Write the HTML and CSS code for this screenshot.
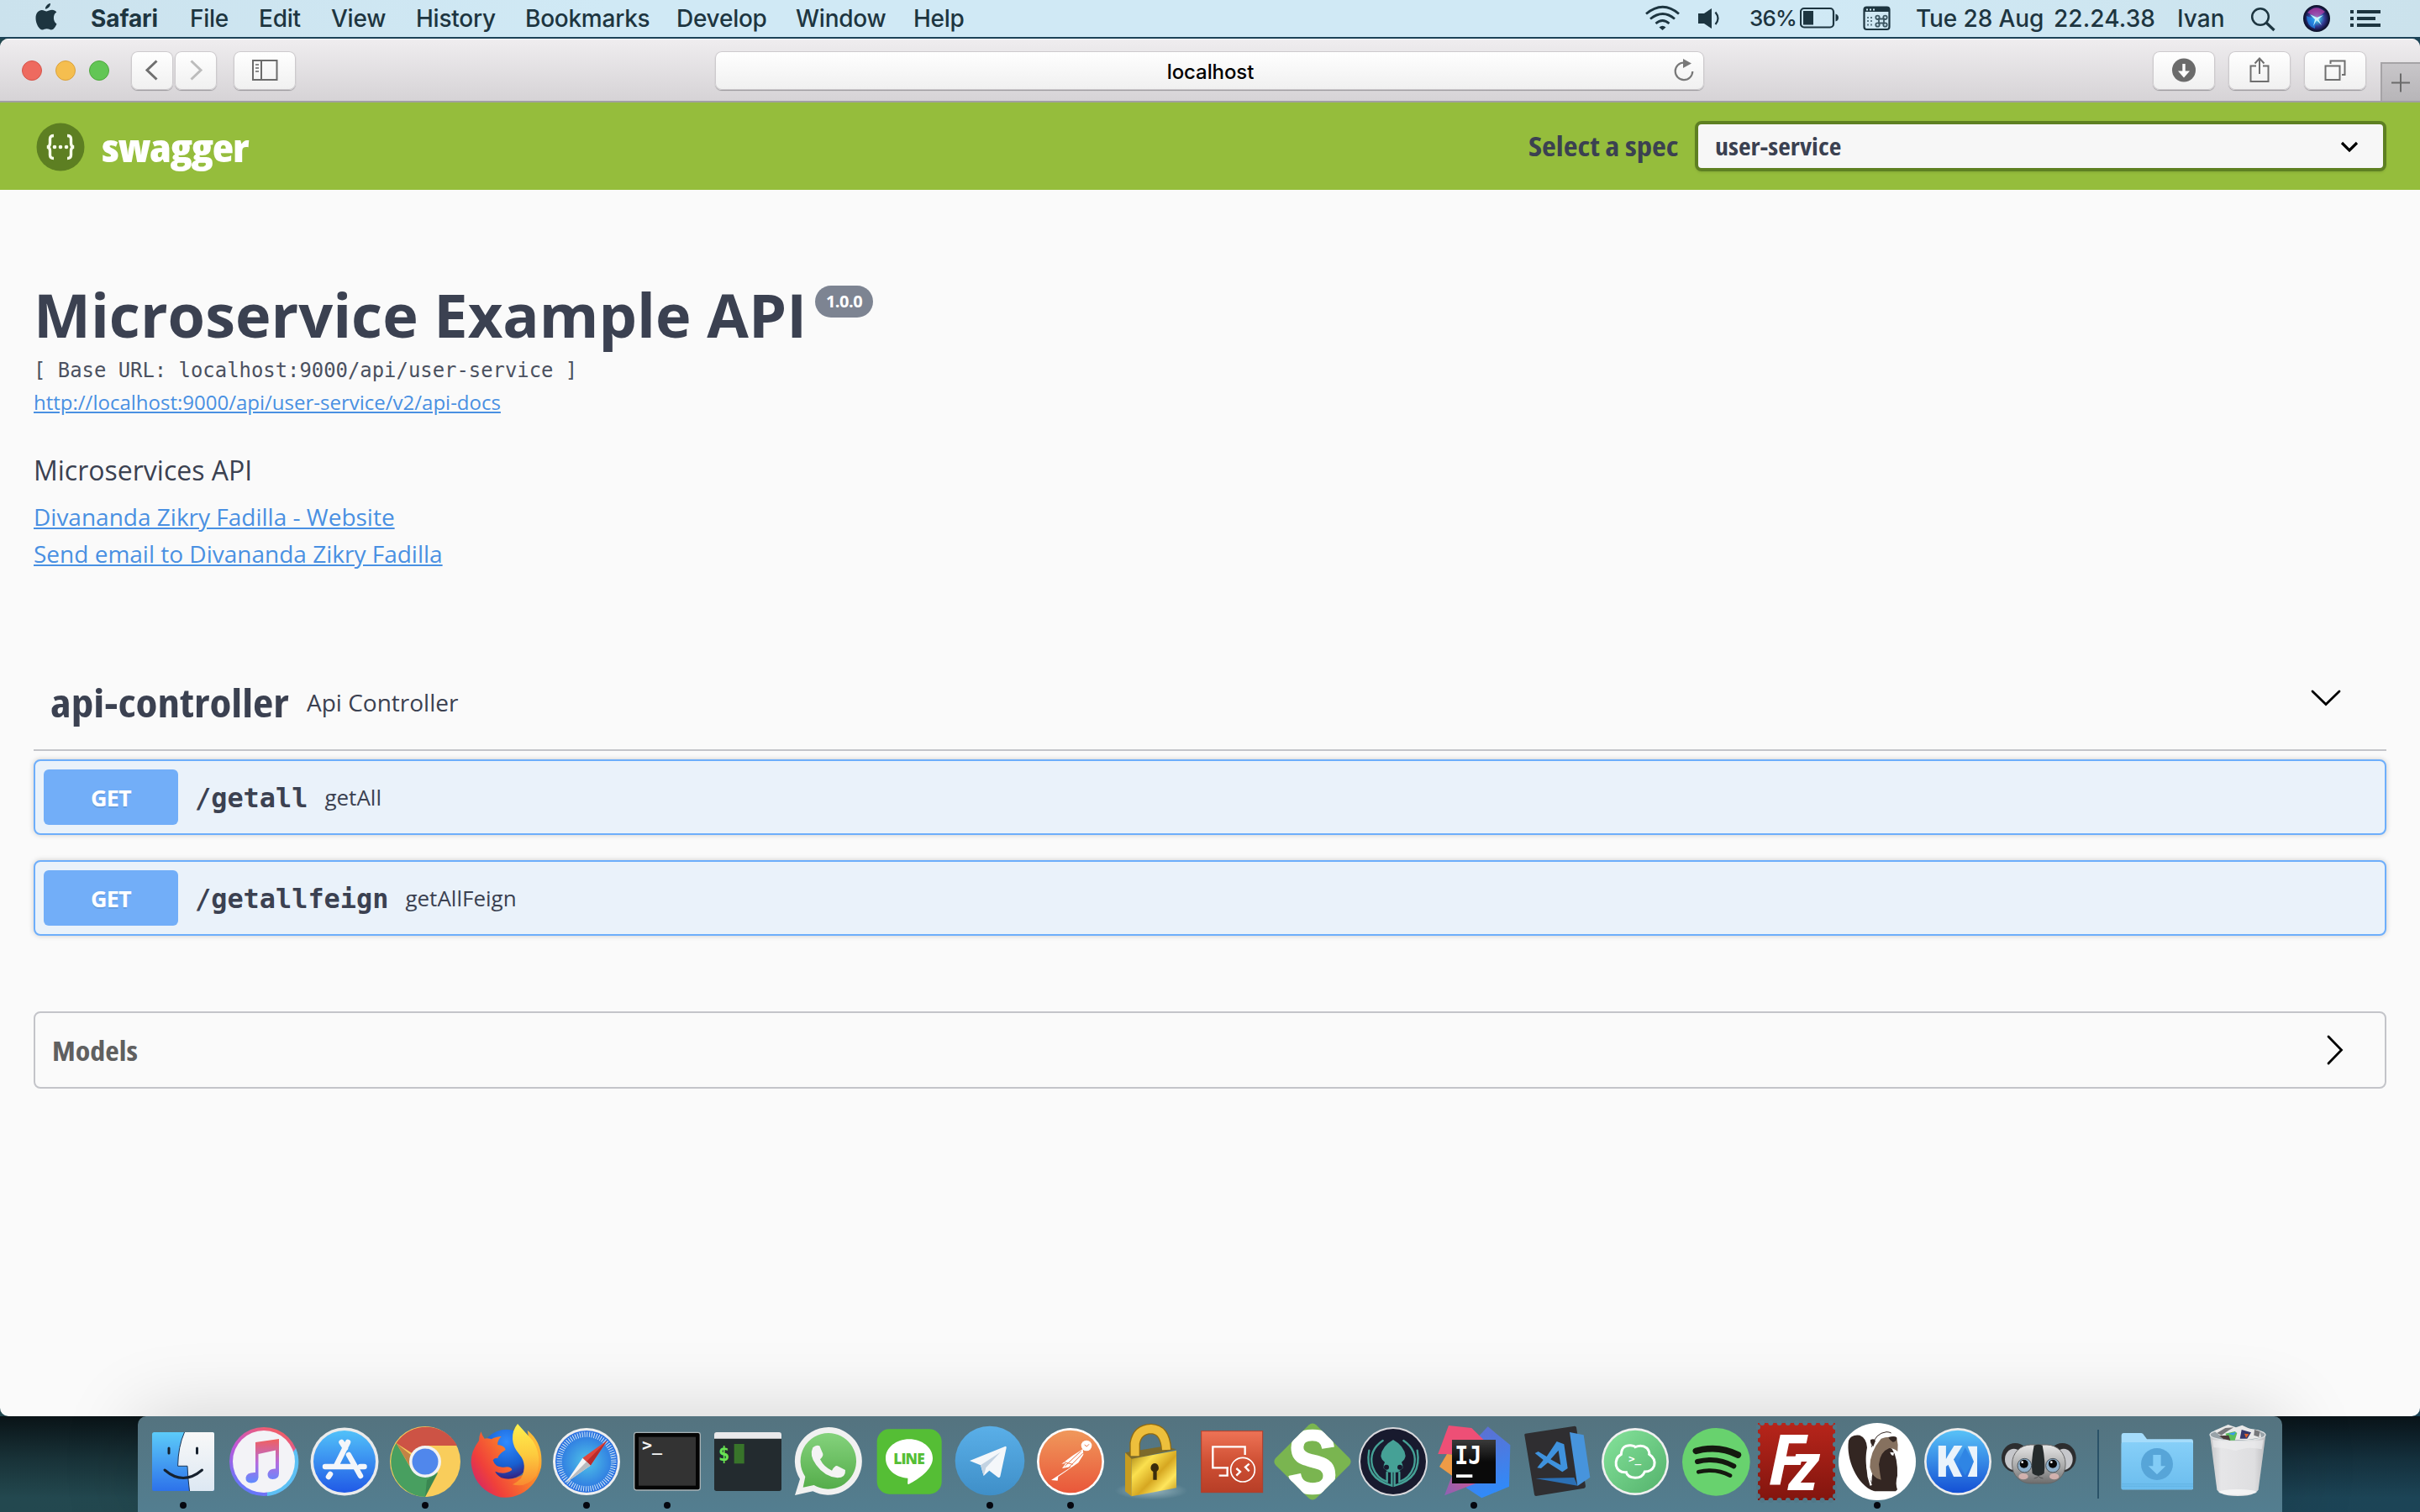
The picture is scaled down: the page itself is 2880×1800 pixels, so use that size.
FILE: index.html
```html
<!DOCTYPE html>
<html lang="en">
<head>
<meta charset="utf-8">
<title>Swagger UI</title>
<link rel="stylesheet" href="styles.css">
</head>
<body>
<div class="desktop">
  <header class="menubar">
    <nav class="menu">
      <svg class="apple" width="28" height="34" viewBox="0 0 28 34"><path fill="#1d3540" d="M19 1c.3 3-2.600 6.500-6 6.700C12.600 4.800 15.700 1.400 19 1zM26.500 25.500c-1.500 3.500-3.700 7-6.500 7-2 0-2.800-1.200-5.300-1.200S11.300 32.500 9.500 32.500C5.500 32.500 1.500 25 1.500 18.500c0-6 3.500-9.500 7.300-9.500 2.300 0 4 1.400 5.700 1.400S18.300 8.800 21 8.800c2 0 4 1 5.300 2.800-5 3-4 11.500.2 13.900z"/></svg>
      <span class="mi app">Safari</span><span class="mi file">File</span><span class="mi edit">Edit</span><span class="mi view">View</span><span class="mi hist">History</span><span class="mi book">Bookmarks</span><span class="mi dev">Develop</span><span class="mi win">Window</span><span class="mi">Help</span>
    </nav>
    <div class="status">
      <svg class="wifi" width="44" height="32" viewBox="0 0 44 32" fill="none" stroke="#1d3540" stroke-width="2.800"><path d="M2 10.500Q22-6 41 10.500M7 16.500Q22 4.500 36 16.500M13.500 22Q21.500 15 29.500 22"/><path d="M17.500 26.500q4-3.500 8 0L21.500 30z" fill="#1d3540" stroke="none"/></svg>
      <svg class="vol" width="28" height="26" viewBox="0 0 28 26"><path fill="#1d3540" d="M0 7h7L16 1v24L7 19H0z"/><path d="M20.500 5.500q6 7.500 0 14.500" fill="none" stroke="#1d3540" stroke-width="2.200"/></svg>
      <span class="st pct">36%</span>
      <svg class="batt" width="48" height="26" viewBox="0 0 48 26"><rect x="1" y="2" width="39" height="22.500" rx="4" fill="none" stroke="#1d3540" stroke-width="2.200"/><rect x="4" y="5" width="12" height="16.500" fill="#1d3540"/><path d="M42.500 8.500q3.500 1 3.500 4.500t-3.500 4.500z" fill="#1d3540"/></svg>
      <svg class="keys" width="34" height="30" viewBox="0 0 34 30"><rect x="1.500" y="1.500" width="30" height="26.500" rx="3" fill="none" stroke="#1d3540" stroke-width="2.200"/><path fill="#1d3540" d="M2 2h29v5H2z"/><path stroke="#cfe7f2" stroke-width="2" stroke-dasharray="2 2" d="M4 4.500h10"/><path stroke="#5d7985" stroke-width="2" stroke-dasharray="2 2" d="M5 14h6M5 18h6M5 22.500h6"/><g fill="none" stroke="#3c5763" stroke-width="1.800"><path d="M19 15.500h6v5h-6z"/><circle cx="17.500" cy="13.800" r="2.200"/><circle cx="26.500" cy="13.800" r="2.200"/><circle cx="17.500" cy="22.500" r="2.200"/><circle cx="26.500" cy="22.500" r="2.200"/></g></svg>
      <span class="st date">Tue 28 Aug</span><span class="st time">22.24.38</span><span class="st user">Ivan</span>
      <svg class="find" width="32" height="30" viewBox="0 0 32 30" fill="none" stroke="#1d3540" stroke-width="2.500"><circle cx="12" cy="12" r="9.800"/><path d="M19 19l9.500 9" stroke-width="3.200"/></svg>
      <svg class="siri" width="32" height="32" viewBox="0 0 32 32"><defs><radialGradient id="siri" cx=".5" cy=".5" r=".5"><stop offset="0" stop-color="#dff"/><stop offset=".3" stop-color="#38a6d8"/><stop offset=".65" stop-color="#343a94"/><stop offset="1" stop-color="#10133a"/></radialGradient></defs><circle cx="16" cy="16" r="16" fill="#10142e"/><circle cx="16" cy="16" r="14.500" fill="url(#siri)"/><path d="M5 9Q15-2 26 8L17 15Z" fill="#b63fa4" opacity=".75"/><path d="M4 13Q4 25 14 28L15 17Z" fill="#1e8ef0" opacity=".7"/><path d="M8 11l8 4 8-3-6 5 4 7-6-6-4 7 2-8z" fill="#c9f4fb"/></svg>
      <svg class="list" width="38" height="22" viewBox="0 0 38 22" fill="#1d3540"><path d="M1 1h4v4H1zM9 1h28v4H9zM1 9h4v4H1zM9 9h22v4H9zM1 17h4v4H1zM9 17h28v4H9z"/></svg>
    </div>
  </header>

  <main class="window">
    <div class="toolbar">
      <div class="lights"><i class="red"></i><i class="yellow"></i><i class="green"></i></div>
      <div class="nav">
        <span class="btn half"><svg width="50" height="44" viewBox="0 0 50 44" fill="none" stroke="#6f6f6f" stroke-width="3"><path d="M30.500 11.500L19 22.500l11.500 11"/></svg></span>
        <span class="btn half"><svg width="50" height="44" viewBox="0 0 50 44" fill="none" stroke="#bcbcbc" stroke-width="3"><path d="M19.500 11.500L31 22.500l-11.500 11"/></svg></span>
      </div>
      <span class="btn side"><svg width="74" height="44" viewBox="0 0 74 44" fill="none" stroke="#6b6b6b" stroke-width="2"><path d="M23 11h28.500v23H23zM33 11v23"/><path d="M26 16h4M26 20h4M26 24h4" stroke="#8a8a8a"/></svg></span>
      <div class="btn address"><span class="host">localhost</span><svg class="reload" width="28" height="30" viewBox="0 0 28 30"><path d="M14 5.500A10.300 10.300 0 1 0 24.300 16" fill="none" stroke="#787878" stroke-width="2.200"/><path d="M13 1l10 5.500-10 5.500z" fill="#787878"/></svg></div>
      <div class="tools">
        <span class="btn side"><svg width="74" height="44" viewBox="0 0 74 44"><circle cx="37" cy="22.500" r="14" fill="#6b6b6b"/><path d="M35.300 15h3.400v8.500h5.300L37 31.500l-7-8h5.300z" fill="#fff"/></svg></span>
        <span class="btn side"><svg width="74" height="44" viewBox="0 0 74 44" fill="none" stroke="#6f6f6f" stroke-width="2"><path d="M33 17.500h-6.500V36h21V17.500H41M37 27V8.500M31.500 14.500L37 8.500l5.500 6"/></svg></span>
        <span class="btn side"><svg width="74" height="44" viewBox="0 0 74 44" fill="none" stroke="#6f6f6f" stroke-width="2"><path d="M25.500 17.500h17V34h-17zM31.500 15v-3.500h17V28H45"/></svg></span>
      </div>
      <span class="newtab"><svg width="46" height="46" viewBox="0 0 46 46" stroke="#6b6b6b" stroke-width="2"><path d="M13 24.500h22M24 13.500v22"/></svg></span>
    </div>

    <div class="topbar">
      <svg class="mark" width="58" height="58" viewBox="0 0 58 58"><circle cx="29" cy="29" r="28.500" fill="#5d7f22"/><g fill="none" stroke="#f6fbe9" stroke-width="3.400"><path d="M21 15.500q-4.500 0-4.500 4v5q0 4-3.500 4.500 3.500.5 3.500 4.500v5q0 4 4.500 4M37 15.500q4.500 0 4.500 4v5q0 4 3.500 4.500-3.500.5-3.500 4.500v5q0 4-4.500 4"/></g><g fill="#f6fbe9"><circle cx="22" cy="29" r="2.300"/><circle cx="29" cy="29" r="2.300"/><circle cx="36" cy="29" r="2.300"/></g></svg>
      <span class="brand">swagger</span>
      <label class="speclabel">Select a spec</label>
      <div class="select"><span class="spec">user-service</span><svg width="22" height="14" viewBox="0 0 22 14" fill="none" stroke="#000" stroke-width="3.200"><path d="M2 2l9 9 9-9"/></svg></div>
    </div>

    <div class="content">
      <section class="info">
        <div class="titlerow"><h1>Microservice Example API</h1><span class="version"><b>1.0.0</b></span></div>
        <pre class="base">[ Base URL: localhost:9000/api/user-service ]</pre>
        <a class="docs" href="#">http://localhost:9000/api/user-service/v2/api-docs</a>
        <p class="desc">Microservices API</p>
        <a class="contact site" href="#">Divananda Zikry Fadilla - Website</a>
        <a class="contact mail" href="#">Send email to Divananda Zikry Fadilla</a>
      </section>
      <section class="tag">
        <div class="taghead"><h3>api-controller</h3><small>Api Controller</small><svg width="38" height="22" viewBox="0 0 38 22" fill="none" stroke="#000" stroke-width="2.800" stroke-linecap="round"><path d="M3 3l16 15.500L35 3"/></svg></div>
        <div class="op"><span class="method">GET</span><span class="path">/getall</span><span class="sum s1">getAll</span></div>
        <div class="op"><span class="method">GET</span><span class="path">/getallfeign</span><span class="sum s2">getAllFeign</span></div>
      </section>
      <section class="models"><h4>Models</h4><svg width="22" height="38" viewBox="0 0 22 38" fill="none" stroke="#000" stroke-width="2.800" stroke-linecap="round"><path d="M3 3l15.500 16L3 35"/></svg></section>
    </div>
  </main>

  <footer class="shelf">
    <div class="dock">
      <span class="icon run"><svg viewBox="-48 -54 96 114"><defs><linearGradient id="fi" x2="0" y2="1"><stop stop-color="#5ccbf9"/><stop offset="1" stop-color="#2d72ea"/></linearGradient><linearGradient id="fw" x2="0" y2="1"><stop stop-color="#f8f8f8"/><stop offset="1" stop-color="#dde8f3"/></linearGradient></defs><rect x="-37" y="-35" width="74" height="70" rx="2.500" fill="url(#fi)"/><path d="M1.500-35H35q2 0 2 2V33q0 2-2 2H7.500Q5.500 20 5 5.300H-6.400Q-6-18 1.500-35z" fill="url(#fw)"/><path d="M1.500-35Q-6-18-6.400 5.300H5Q5.500 20 7.500 35" fill="none" stroke="#1b3657" stroke-width="1"/><path d="M-17-16v6M16.500-16v6M-22 10Q0 29 22.500 10" fill="none" stroke="#16212e" stroke-width="3" stroke-linecap="round"/></svg></span>
      <span class="icon"><svg viewBox="-48 -54 96 114"><defs><linearGradient id="it" x1=".8" y1="0" x2=".3" y2="1"><stop stop-color="#fb5f53"/><stop offset=".5" stop-color="#c256d8"/><stop offset="1" stop-color="#5c7bff"/></linearGradient><linearGradient id="nt" x2="0" y2="1"><stop stop-color="#f1605c"/><stop offset=".55" stop-color="#b36be0"/><stop offset="1" stop-color="#5e8bff"/></linearGradient></defs><circle r="41" fill="url(#it)"/><path d="M38-16A41 41 0 0 1 4 41L4 36Z" fill="#5cc0f4"/><circle r="37" fill="#f3f3f7"/><path d="M-10-23L18-27V14q0 7-7.500 7-6.500-.5-6-6.500Q6 8 14 8.500V-13.500L-6.500-9V19q-1 6.500-8.500 6.500-7-.5-6.500-6.500 1-6.500 11.500-6z" fill="url(#nt)"/></svg></span>
      <span class="icon"><svg viewBox="-48 -54 96 114"><defs><linearGradient id="as" x2="0" y2="1"><stop stop-color="#52c1f9"/><stop offset="1" stop-color="#2059e6"/></linearGradient></defs><circle r="40.500" fill="#ebebeb"/><circle r="37" fill="url(#as)"/><g stroke="#f4f6fa" stroke-width="6.500" stroke-linecap="round"><path d="M4-23L-10 5M-3.500-23L1-16M5-8L19 17M-23 6H10M19 6H23.500M-17 15L-19 18"/></g></svg></span>
      <span class="icon run"><svg viewBox="-48 -54 96 114"><circle r="42" fill="#f9cd5b"/><path d="M0 0L-34.500-22A42 42 0 0 1 38-19H0z" fill="#cd5345"/><path d="M-34.500-22L-16 10 15 13 0 42A42 42 0 0 1-34.500-22z" fill="#489f60"/><path d="M-34.500-22L-18 6-17-8z" fill="#8e3a30" opacity=".5"/><path d="M15 14L0 42 2 22z" fill="#2c6f42" opacity=".5"/><circle r="19" fill="#f2f2f2"/><circle r="15.500" fill="#5087ec"/></svg></span>
      <span class="icon"><svg viewBox="-18 78 288 342"><defs><radialGradient id="gl" cx=".5" cy=".25" r=".8"><stop stop-color="#2f8cff"/><stop offset=".6" stop-color="#185fd0"/><stop offset="1" stop-color="#3a1470"/></radialGradient><linearGradient id="fx" x1="0" y1=".8" x2="1" y2=".2"><stop stop-color="#d1246b"/><stop offset=".25" stop-color="#f0403a"/><stop offset=".7" stop-color="#fb8a28"/><stop offset="1" stop-color="#fec63c"/></linearGradient><linearGradient id="fy" x2="0" y2="1"><stop stop-color="#fff04d"/><stop offset=".5" stop-color="#fdcb3e"/><stop offset="1" stop-color="#f98a30"/></linearGradient></defs><circle cx="128" cy="214" r="89" fill="url(#gl)"/><path d="M37 133Q30 150 30 165 0 205 2 245 10 330 90 362 130 378 180 355 235 325 252 260 262 175 203 128 225 240 190 285 150 310 110 298 90 285 88 275 120 290 148 270 145 255 118 260 88 262 80 235 85 225 97 228 98 215 125 198 122 183 97 180 95 165 110 150 85 152 75 160 60 155 50 158 42 148 37 133z" fill="url(#fx)"/><path d="M168 105Q148 130 150 160 152 190 175 215 205 250 180 300 165 315 150 322 200 335 235 290 258 220 222 165 190 130 168 105z" fill="url(#fy)"/></svg></span>
      <span class="icon run"><svg viewBox="270 78 288 342"><defs><radialGradient id="sf"><stop stop-color="#4fc3e8"/><stop offset="1" stop-color="#2a6fe0"/></radialGradient></defs><circle cx="414" cy="240" r="120" fill="#efefef"/><circle cx="414" cy="240" r="111" fill="url(#sf)"/><circle cx="414" cy="240" r="97" fill="none" stroke="#dcecf8" stroke-width="19" stroke-dasharray="2.800 5.670"/><path d="M488 164L428 254 400 227z" fill="#e0453c"/><path d="M488 164L428 254 414 240z" fill="#b92c2b"/><path d="M340 316L400 227 428 254z" fill="#f5f5f5"/><path d="M340 316L414 240 428 254z" fill="#b9bcbf"/></svg></span>
      <span class="icon run"><svg viewBox="558 78 288 342"><rect x="584" y="136" width="236" height="206" rx="8" fill="#050505" stroke="#a8b3b6" stroke-width="4"/><rect x="600" y="152" width="204" height="174" fill="#333"/><text x="612" y="202" font-family="DejaVu Sans Mono" font-size="60" font-weight="bold" fill="#f4f4f4">&gt;_</text></svg></span>
      <span class="icon"><svg viewBox="846 78 288 342"><rect x="870" y="136" width="240" height="209" rx="8" fill="#232b2f"/><path d="M870 158v-15q0-8 8-8h224q8 0 8 8v15z" fill="#e9e9eb"/><text x="884" y="236" font-family="DejaVu Sans Mono" font-size="68" font-weight="bold" fill="#69e454">$</text><rect x="941" y="177" width="36" height="70" fill="#38742a"/></svg></span>
      <span class="icon"><svg viewBox="1134 78 288 342"><defs><linearGradient id="wa" x2="0" y2="1"><stop stop-color="#84d27c"/><stop offset="1" stop-color="#55ad4b"/></linearGradient></defs><path d="M1278 117A121 121 0 1 1 1222 346L1158 360 1176 302A121 121 0 0 1 1278 117z" fill="#f1f1f1"/><path d="M1278 138A100 100 0 1 1 1226 324L1187 332 1195 294A100 100 0 0 1 1278 138z" fill="url(#wa)"/><path d="M1222 190q12-12 24-6l12 28q2 8-10 20 14 28 42 40 12-20 20-16l28 14q2 28-28 28-46-4-76-46-26-34-12-62z" fill="#f4f4f4"/></svg></span>
      <span class="icon"><svg viewBox="42 78 288 342"><rect x="71" y="124" width="231" height="232" rx="44" fill="#55be35"/><path d="M186 160c46 0 84 30 84 68 0 40-50 75-86 93-6 0-2-12-3-22-44-2-79-32-79-71 0-38 38-68 84-68z" fill="#fff"/><text x="186" y="249" text-anchor="middle" textLength="112" font-family="Open Sans" font-size="52" font-weight="800" fill="#55be35">LINE</text></svg></span>
      <span class="icon run"><svg viewBox="330 78 288 342"><defs><linearGradient id="tg" x2="0" y2="1"><stop stop-color="#5aafe8"/><stop offset="1" stop-color="#3f8fc8"/></linearGradient></defs><circle cx="474" cy="237" r="124" fill="url(#tg)"/><path d="M402 237L530 185q4 0 3 6L511 293q-2 6-8 3L472 272 452 291 441 253z" fill="#f4f7fa"/><path d="M441 253L512 206 460 262 452 291z" fill="#c3d3e2"/></svg></span>
      <span class="icon run"><svg viewBox="618 78 288 342"><defs><linearGradient id="pm" x2="0" y2="1"><stop stop-color="#f0985b"/><stop offset="1" stop-color="#e9573a"/></linearGradient></defs><circle cx="762" cy="240" r="120" fill="#fff"/><circle cx="762" cy="240" r="112" fill="url(#pm)"/><circle cx="819" cy="183" r="19" fill="#fff"/><path d="M806 195L770 218 730 248 745 246 732 264 766 258 708 296 693 306 716 308 718 294 790 244 808 215z" fill="#fff"/><path d="M800 202L742 256M806 210L755 262M740 242L770 250M812 180l8 6 8-8" fill="none" stroke="#ea7447" stroke-width="3"/></svg></span>
      <span class="icon"><svg viewBox="906 78 288 342"><defs><linearGradient id="lk" x2="1" y2="1"><stop stop-color="#a57f10"/><stop offset=".3" stop-color="#fbe04e"/><stop offset=".55" stop-color="#d6a721"/><stop offset=".75" stop-color="#ffe65c"/><stop offset="1" stop-color="#b98a12"/></linearGradient><radialGradient id="lg"><stop stop-color="#a9c3ca" stop-opacity=".8"/><stop offset="1" stop-color="#a9c3ca" stop-opacity="0"/></radialGradient></defs><ellipse cx="1050" cy="344" rx="130" ry="32" fill="url(#lg)"/><path d="M957 208L1090 186 1140 196 980 232z" fill="#7d6a2a"/><path d="M957 208L980 230V364L957 346z" fill="#c79c20"/><path d="M980 230L1140 200V334L980 364z" fill="url(#lk)"/><path d="M992 218V175Q1000 125 1050 123 1100 125 1104 196" fill="none" stroke="#8f6a12" stroke-width="38"/><path d="M992 220V175Q1000 125 1050 123 1100 125 1104 198" fill="none" stroke="#edbf3c" stroke-width="30"/><path d="M1062 246a16 16 0 0 1 8 29v30h-13v-29a16 16 0 0 1 5-30z" fill="#3a2c0c"/></svg></span>
      <span class="icon"><svg viewBox="1194 78 288 342"><defs><linearGradient id="rd" x2="0" y2="1"><stop stop-color="#ee7356"/><stop offset=".5" stop-color="#cf5034"/><stop offset="1" stop-color="#b73e27"/></linearGradient></defs><rect x="1229" y="131" width="219" height="219" fill="url(#rd)" stroke="#b03e2a" stroke-width="3"/><g fill="none" stroke="#fff" stroke-width="7"><path d="M1385 216V187H1270V262H1326M1322 262V290H1292"/><circle cx="1377" cy="269" r="43" stroke-width="5"/><path d="M1354 264l14 12-14 14M1400 248l-14 12 14 14"/></g></svg></span>
      <span class="icon"><svg viewBox="42 78 288 342"><rect x="84" y="138" width="204" height="204" rx="18" transform="rotate(45 186 240)" fill="#7ab550"/><clipPath id="sq"><rect x="84" y="138" width="204" height="204" rx="18" transform="rotate(45 186 240)"/></clipPath><g clip-path="url(#sq)"><text x="186" y="351" text-anchor="middle" textLength="178" lengthAdjust="spacingAndGlyphs" font-family="Liberation Sans" font-size="316" font-weight="bold" fill="#fff" stroke="#fff" stroke-width="8">S</text></g></svg></span>
      <span class="icon"><svg viewBox="330 78 288 342"><circle cx="474" cy="240" r="123" fill="#d9d9dd"/><circle cx="474" cy="240" r="117" fill="#181a2e"/><path d="M474 162q40 22 44 58-2 14-14 22 6 10 4 22l-18 14h-32l-18-14q-2-12 4-22-12-8-14-22 4-36 44-58z" fill="#45a196"/><g fill="none" stroke="#45a196" stroke-width="7" stroke-linecap="round"><path d="M437 165Q385 200 400 258 415 300 452 312V278M511 165Q563 200 548 258 533 300 496 312V278M388 200Q370 300 469 326V278M560 200Q578 300 479 326V278"/></g><circle cx="450" cy="260" r="9" fill="#181a2e"/><circle cx="498" cy="260" r="9" fill="#181a2e"/></svg></span>
      <span class="icon run"><svg viewBox="618 78 288 342"><defs><linearGradient id="jb" x1=".2" x2=".4" y2="1"><stop stop-color="#5f6fd0"/><stop offset="1" stop-color="#2f8bfa"/></linearGradient><linearGradient id="jk" x2="0" y2="1"><stop stop-color="#3a3a3a"/><stop offset=".5" stop-color="#0a0a0a"/></linearGradient><linearGradient id="jp" x1="1" x2="0" y2="1"><stop stop-color="#f4507d"/><stop offset="1" stop-color="#8b62b5"/></linearGradient></defs><path d="M812 115L892 181 888 329 790 370 735 334 760 170z" fill="url(#jb)"/><path d="M690 214L684 290 657 361 790 310 780 215z" fill="url(#jp)"/><path d="M672 111L754 120 800 165V215L634 213z" fill="#ee4f76"/><path d="M666 213L700 216V270L684 290 639 258z" fill="#ee9b46"/><path d="M684 162h156v156H684z" fill="url(#jk)"/><text x="694" y="250" textLength="96" lengthAdjust="spacingAndGlyphs" font-family="DejaVu Sans Mono" font-size="92" font-weight="bold" fill="#fff">IJ</text><path d="M699 286h58v11h-58z" fill="#fff"/></svg></span>
      <span class="icon"><svg viewBox="906 78 288 342"><path d="M946 140L1122 113q5 0 6 5L1161 328q0 5-5 7L984 363q-5 0-6-5L943 146q-1-5 3-6z" fill="#2f2e31"/><path d="M1104 135L1154 145 1177 296 1132 327z" fill="#4794dc"/><path d="M982 300L1120 297 1132 326z" fill="#2b6fb4"/><path fill-rule="evenodd" d="M1058 168L1084 178 1097 264 1078 277 1026 244 1002 264 988 262 1010 234 980 210 992 204 1022 222zM1064 200L1036 232 1072 252z" fill="#3f92dd"/></svg></span>
      <span class="icon"><svg viewBox="1194 78 288 342"><defs><linearGradient id="tm" x2="1" y2="1"><stop stop-color="#85e39b"/><stop offset="1" stop-color="#54b26c"/></linearGradient></defs><circle cx="1338" cy="240" r="120" fill="#f0f0f0"/><circle cx="1338" cy="240" r="112" fill="url(#tm)"/><path d="M1288 214q2-34 34-32 14 2 16 6 24-10 42 4 10 12 8 22 24 16 18 40-8 22-34 22-8 22-34 22-28-2-32-20-30 2-36-24-4-28 18-40z" fill="none" stroke="#fff" stroke-width="9"/><text x="1314" y="244" font-family="DejaVu Sans Mono" font-size="38" font-weight="bold" fill="#fff">&gt;_</text></svg></span>
      <span class="icon"><svg viewBox="42 78 288 342"><circle cx="187" cy="241" r="121" fill="#68d26e"/><g fill="none" stroke="#14190f" stroke-linecap="round"><path d="M115 202Q195 180 265 216" stroke-width="23"/><path d="M120 240Q190 222 250 256" stroke-width="18"/><path d="M124 277Q185 262 237 290" stroke-width="14"/></g></svg></span>
      <span class="icon"><svg viewBox="330 78 288 342"><defs><linearGradient id="fz" x2="0" y2="1"><stop stop-color="#b7251b"/><stop offset="1" stop-color="#82150e"/></linearGradient></defs><path d="M336 102h276v276H336z" fill="url(#fz)"/><path d="M336 102h276v276H336z" fill="none" stroke="#517888" stroke-width="18" stroke-linecap="round" stroke-dasharray="0 30.667" stroke-dashoffset="-15.300"/><text x="372" y="322" font-family="Open Sans" font-size="250" font-weight="bold" font-style="italic" fill="#fff">F<tspan dx="-58" dy="20" font-size="236">z</tspan></text></svg></span>
      <span class="icon run"><svg viewBox="618 78 288 342"><circle cx="762" cy="240" r="138" fill="#fff"/><path d="M750 345C690 325 650 230 660 165Q668 142 700 146 724 156 726 190C716 240 722 300 765 340z" fill="#332622"/><path d="M738 162q14-6 18 4l-8 20q-12-10-10-24zM770 200Q800 180 815 195 836 225 834 290 826 318 834 340L828 346H752Q735 318 748 270 745 230 770 200z" fill="#332622"/><path d="M776 158Q800 148 832 156 838 180 835 204 822 192 805 192 772 205 768 250 772 285 776 305 745 300 736 260 735 205 776 158z" fill="#86715f"/><path d="M802 154q20-8 30 0 0 16-14 16-12-6-16-16z" fill="#332622"/><path d="M742 188Q755 138 795 134 805 134 812 138" fill="none" stroke="#332622" stroke-width="3"/><path d="M736 190Q716 260 740 325" fill="none" stroke="#fff" stroke-width="7"/><path d="M808 206l14 2-2 10q-8 2-12-12z" fill="#fff"/></svg></span>
      <span class="icon"><svg viewBox="906 78 288 342"><defs><linearGradient id="ki" x2="0" y2="1"><stop stop-color="#59c2f7"/><stop offset="1" stop-color="#1450d4"/></linearGradient></defs><circle cx="1050" cy="240" r="120" fill="#ececec"/><circle cx="1050" cy="240" r="112" fill="url(#ki)"/><text x="970" y="294" font-family="Open Sans" font-size="152" font-weight="800" fill="#eaf3fb" textLength="96" lengthAdjust="spacingAndGlyphs">K</text><path d="M1085 185h34v109h-34l22-54z" fill="#eaf3fb"/><path d="M1076 190L1104 240 1076 290 1052 240z" fill="#2f85e4"/></svg></span>
      <span class="icon"><svg viewBox="1194 78 288 342"><defs><linearGradient id="ko" x2="0" y2="1"><stop stop-color="#e6e6e6"/><stop offset=".6" stop-color="#a5a5a5"/><stop offset="1" stop-color="#6c6c6c"/></linearGradient></defs><ellipse cx="1255" cy="226" rx="49" ry="52" fill="#2c2d2f"/><ellipse cx="1423" cy="226" rx="49" ry="52" fill="#2c2d2f"/><ellipse cx="1250" cy="232" rx="32" ry="38" fill="#c6c7cb"/><ellipse cx="1428" cy="232" rx="32" ry="38" fill="#c6c7cb"/><rect x="1244" y="180" width="190" height="138" rx="66" fill="url(#ko)" stroke="#666" stroke-width="3"/><ellipse cx="1284" cy="293" rx="17" ry="11" fill="#e3bcb8" opacity=".8"/><ellipse cx="1394" cy="293" rx="17" ry="11" fill="#e3bcb8" opacity=".8"/><circle cx="1288" cy="254" r="25" fill="#8fb0cb" stroke="#4d565d" stroke-width="3"/><circle cx="1389" cy="254" r="25" fill="#8fb0cb" stroke="#4d565d" stroke-width="3"/><circle cx="1286" cy="248" r="15" fill="#060708"/><circle cx="1389" cy="248" r="15" fill="#060708"/><circle cx="1280" cy="242" r="4" fill="#fff"/><circle cx="1384" cy="242" r="4" fill="#fff"/><path d="M1322 182q16-6 30 0 12 60 6 100-20 18-42 0-6-40 6-100z" fill="#252b2c"/><path d="M1322 300q12-2 16-8 4 6 16 8" fill="none" stroke="#555" stroke-width="3"/></svg></span>
      <span class="divider"></span>
      <span class="icon"><svg viewBox="234 138 288 342"><defs><linearGradient id="fo" x2="0" y2="1"><stop stop-color="#86cff8"/><stop offset="1" stop-color="#6bbdee"/></linearGradient></defs><path d="M251 206q0-7 7-8h64q6 0 10 8l10 14h158q7 0 7 7v168q0 5-5 5H256q-5 0-5-5z" fill="#a5dcfb"/><path d="M251 236q0-5 6-5h243q7 0 7 5v159q0 5-5 5H256q-5 0-5-5z" fill="url(#fo)"/><path d="M251 380h256M251 388h256" stroke="#5eaee0" stroke-width="2"/><circle cx="378" cy="309" r="57" fill="#57a5d8"/><path d="M364 276h28v40h17l-31 30-31-30h17z" fill="#82ccf6"/></svg></span>
      <span class="icon"><svg viewBox="522 138 288 342"><defs><linearGradient id="tr"><stop stop-color="#c5c5c7"/><stop offset=".2" stop-color="#e6e6e8"/><stop offset=".8" stop-color="#dedee0"/><stop offset="1" stop-color="#bdbdc0"/></linearGradient></defs><path d="M567 204L592 400Q600 422 667 423 732 422 740 400L766 204z" fill="url(#tr)"/><ellipse cx="666" cy="204" rx="99" ry="22" fill="#98a2a8" stroke="#dfe3e5" stroke-width="4"/><path d="M582 190L632 168 660 178 682 170 716 186 744 188 750 214 700 222H620z" fill="#e9e9e9"/><path d="M592 198l30-18 30-2-20 12-24 16zM726 186l20 6-4 20-18-6z" fill="#77787b"/><path d="M622 200l34-8 8 6-8 26h-20z" fill="#5dbf5a"/><path d="M632 200l28-6-8 12z" fill="#3a9bea"/><path d="M680 186l34 10-14 22h-26z" fill="#35386b"/><path d="M690 200l16 2-10 14z" fill="#e0632a"/><path d="M600 208l34-2 6 18-24-4z" fill="#4c3d3b"/><path d="M576 222Q600 228 666 228T758 222L752 256Q700 244 660 262 620 250 580 250z" fill="#efeff0" opacity=".6"/><ellipse cx="666" cy="409" rx="68" ry="10" fill="#fff" opacity=".6"/></svg></span>
    </div>
  </footer>
</div>
</body>
</html>
```
FILE: styles.css
```css
* { box-sizing: border-box; }
body { margin: 0; background: #20444f; }
h1, h3, h4, p, pre { margin: 0; }
svg { display: block; flex: none; }

.desktop {
  width: 2880px; height: 1800px; overflow: hidden;
  display: flex; flex-direction: column;
  background: linear-gradient(90deg, #23484f, #1c4456);
  font-family: "Open Sans", sans-serif; color: #3b4151;
}

/* menu bar */
.menubar {
  height: 46px; flex: none; display: flex; justify-content: space-between;
  background: linear-gradient(90deg, #cbe2ed, #d0e9f5 25%, #d0e9f5 75%, #cbe2ec);
  border-bottom: 2px solid #1c4257;
  font: 28px/44px Inter, sans-serif; color: #1d3540; white-space: nowrap;
}
.menu { display: flex; padding-left: 41px; }
.apple { margin: 3px 39px 0 0; }
.mi { letter-spacing: -.25px; font-weight: 450; }
.app { font-weight: 700; width: 118px; letter-spacing: -.1px; }
.file { width: 82px; }
.edit { width: 86px; }
.view { width: 101px; }
.hist { width: 130px; }
.book { width: 180px; }
.dev { width: 142px; }
.win { width: 140px; }
.status { display: flex; width: 924px; font-weight: 450; }
.wifi { margin: 6px 20px 0 1px; }
.vol { margin: 9px 33px 0 0; }
.pct { width: 60px; font-size: 26px; letter-spacing: -.9px; }
.batt { margin: 8px 27px 0 0; }
.keys { margin: 7px 29px 0 0; }
.date { width: 164px; letter-spacing: -.1px; }
.time { width: 147px; letter-spacing: .1px; }
.user { width: 87px; }
.find { margin: 8px 31px 0 0; }
.siri { margin: 6px 23px 0 0; }
.list { margin: 11px 0 0 0; }

/* browser window */
.window {
  height: 1640px; flex: none; overflow: hidden; background: #fafafa;
  border-radius: 10px; display: flex; flex-direction: column;
}
.toolbar {
  height: 76px; flex: none; display: flex; align-items: flex-start;
  background: linear-gradient(#efedef, #d6d3d6);
  border-bottom: 2px solid #a19fa2; border-top: 1px solid #f8f7f8;
}
.lights { display: flex; gap: 16px; padding: 25px 26px 0 26px; }
.lights i { width: 24px; height: 24px; border-radius: 50%; }
.red { background: #ee6a5f; border: 1px solid #d5544a; }
.yellow { background: #f5be4f; border: 1px solid #d9a13c; }
.green { background: #62c655; border: 1px solid #4fa73e; }
.nav { display: flex; gap: 2px; margin-right: 20px; }
.btn {
  display: flex; height: 46px; margin-top: 14px; border-radius: 8px;
  background: linear-gradient(#fff, #f0f0f0);
  box-shadow: 0 0 0 1px #cdcacd inset, 0 1px 1px #98969a;
}
.half { width: 50px; }
.side { width: 74px; }
.address { width: 1177px; margin-left: 499px; position: relative; }
.host {
  flex: 1; text-align: center; font: 450 24px/50px Inter, sans-serif;
  color: #000; padding-left: 2px; letter-spacing: -.1px;
}
.reload { position: absolute; right: 10px; top: 8px; }
.tools { display: flex; gap: 16px; margin-left: 534px; }
.newtab {
  width: 47px; height: 46px; margin: 27px 0 0 17px;
  background: linear-gradient(#c8c6c9, #b7b5b8);
  border-left: 2px solid #a5a3a6; border-top: 2px solid #a5a3a6;
}
.newtab svg { margin: -2px 0 0 -2px; }

/* swagger header */
.topbar {
  height: 104px; flex: none; display: flex; background: #95bd3c;
  padding: 22px 40px 0 43px; white-space: nowrap; font-weight: 700; font-stretch: 75%;
}
.mark { margin-top: 2px; }
/* condensed bold, widened a little for the square headline look */
.brand, .speclabel, .spec, h3, h4 { transform-origin: 0 50%; }
.brand {
  color: #fff; font-size: 46px; line-height: 60px; margin: 1px 0 0 20px; width: 1698px;
  font-weight: 800; letter-spacing: -1px; transform: scaleX(1.14);
}
.speclabel { font-size: 32px; line-height: 60px; width: 198px; transform: scaleX(1.147); }
.select {
  width: 823px; height: 60px; border: 4px solid #5e8022; border-radius: 8px;
  background: #f7f7f7; display: flex; padding-left: 20px; box-shadow: 0 2px 2px #8aaf38;
}
.spec { font-size: 28px; line-height: 52px; transform: scaleX(1.14); }
.select svg { margin: 20px 29px 0 auto; }

/* page body */
.content { padding: 108px 40px 0; white-space: nowrap; }
.info { display: flex; flex-direction: column; align-items: flex-start; }
.titlerow { display: flex; }
h1 { font-size: 72px; line-height: 80px; width: 930px; font-weight: 700; }
.version {
  width: 69px; height: 38px; margin-top: 6px; border-radius: 19px;
  background: #7d8492; color: #fff; text-align: center; font-size: 20px; line-height: 38px;
}
.version b { letter-spacing: -.5px; }
.base { font: 23.900px/34px "DejaVu Sans Mono", monospace; margin: 10px 0 0; color: #4b5160; }
a { color: #4990e2; text-decoration: underline; }
.docs { font-size: 24px; line-height: 34px; margin-top: 4px; }
.desc { font-size: 32px; line-height: 44px; margin-top: 42px; }
.contact { font-size: 28px; line-height: 44px; }
.site { margin-top: 11px; }

.tag { margin-top: 113px; }
.taghead { display: flex; height: 100px; border-bottom: 2px solid #c3c4c9; margin-bottom: 10px; padding-left: 20px; }
h3 { font-size: 46px; line-height: 60px; margin-top: 12px; width: 305px; font-weight: 700; font-stretch: 75%; transform: scaleX(1.155); }
small { font-size: 28px; line-height: 40px; margin-top: 22px; flex: 1; }
.taghead svg { margin: 26px 53px 0 0; }
.op {
  height: 90px; border: 2px solid #6daefb; border-radius: 8px; background: #eaf2fa;
  box-shadow: 0 0 6px rgba(0,0,0,.19); margin-bottom: 30px;
  display: flex; align-items: flex-start; padding: 10px;
}
.method {
  width: 160px; height: 66px; border-radius: 6px; background: #72aef8; color: #fff;
  text-align: center; font-size: 27px; line-height: 67px; font-weight: 700; letter-spacing: -.8px;
  text-shadow: 0 2px 0 rgba(0,0,0,.1);
}
.path { font: 700 31.900px/66px "DejaVu Sans Mono", monospace; margin: 1px 20px 0 20px; }
.sum { font-size: 26px; line-height: 66px; }
.models {
  margin-top: 90px; height: 92px; border: 2px solid #c3c4c9; border-radius: 8px;
  display: flex; justify-content: space-between; padding: 0 48px 0 20px; color: #606060;
}
h4 { font-size: 32px; line-height: 89px; font-weight: 700; font-stretch: 75%; transform: scaleX(1.125); }
.models svg { margin-top: 25px; }

/* dock */
.shelf {
  flex: 1; display: flex; padding-left: 164px;
  background: linear-gradient(rgba(5,10,13,.85), rgba(5,10,13,.35) 45%, rgba(5,10,13,0) 85%);
}
.dock {
  width: 2552px; display: flex; padding-left: 6px; position: relative;
  border-radius: 10px 10px 0 0;
  background: linear-gradient(#54737f, #537e90);
  box-shadow: 0 0 90px rgba(0,0,0,.17);
}
.icon { width: 96px; height: 114px; position: relative; flex: none; }
.icon svg { width: 96px; height: 114px; }
.run::after {
  content: ""; position: absolute; left: 44px; top: 102px;
  width: 8px; height: 8px; border-radius: 50%; background: #05070f;
}
.divider { width: 2px; height: 82px; margin: 16px 21px 0 22px; background: #2a5268; }
```
